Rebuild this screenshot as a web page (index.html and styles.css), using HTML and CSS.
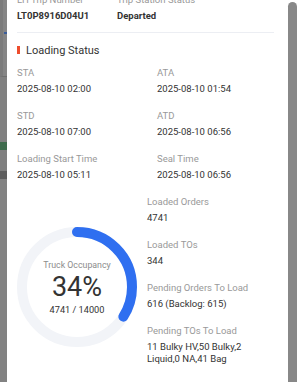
FILE: index.html
```html
<!DOCTYPE html>
<html>
<head>
<meta charset="utf-8">
<link rel="stylesheet" href="styles.css">
</head>
<body>
<div class="backdrop">
  <div class="bd-top"><span class="bd-mark"></span></div>
  <div class="bd-gap1"></div>
  <div class="bd-green"></div>
  <div class="bd-gap2"></div>
  <div class="bd-dark"></div>
  <div class="bd-rest"></div>
</div>
<div class="panel">
  <div class="content">
    <div class="trip-row">
      <div class="trip-col first">
        <div class="label">LH Trip Number</div>
        <div class="strong">LT0P8916D04U1</div>
      </div>
      <div class="trip-col">
        <div class="label">Trip Station Status</div>
        <div class="strong">Departed</div>
      </div>
    </div>
    <div class="divider"></div>
    <div class="heading"><span class="bar"></span>Loading Status</div>
    <div class="grid">
      <div class="item"><div class="label">STA</div><div class="value">2025-08-10 02:00</div></div>
      <div class="item"><div class="label">ATA</div><div class="value">2025-08-10 01:54</div></div>
      <div class="item"><div class="label">STD</div><div class="value">2025-08-10 07:00</div></div>
      <div class="item"><div class="label">ATD</div><div class="value">2025-08-10 06:56</div></div>
      <div class="item"><div class="label">Loading Start Time</div><div class="value">2025-08-10 05:11</div></div>
      <div class="item"><div class="label">Seal Time</div><div class="value">2025-08-10 06:56</div></div>
    </div>
    <div class="occupancy">
      <div class="donut-col">
        <div class="donut">
          <svg class="ring" width="120" height="120" viewBox="0 0 120 120">
            <circle cx="60" cy="60" r="55" fill="none" stroke="#f2f4f8" stroke-width="10"/>
            <circle cx="60" cy="60" r="55" fill="none" stroke="#2f6ff0" stroke-width="10" stroke-linecap="round" stroke-dasharray="117.5 400" transform="rotate(-90 60 60)"/>
          </svg>
          <div class="donut-text">
            <div class="donut-label">Truck Occupancy</div>
            <div class="donut-pct">34%</div>
            <div class="donut-sub">4741 / 14000</div>
          </div>
        </div>
      </div>
      <div class="stats">
        <div class="item"><div class="label">Loaded Orders</div><div class="value">4741</div></div>
        <div class="item"><div class="label">Loaded TOs</div><div class="value">344</div></div>
        <div class="item"><div class="label">Pending Orders To Load</div><div class="value">616 (Backlog: 615)</div></div>
        <div class="item"><div class="label">Pending TOs To Load</div><div class="value">11 Bulky HV,50 Bulky,2 Liquid,0 NA,41 Bag</div></div>
      </div>
    </div>
  </div>
  <div class="scrollbar"><div class="thumb"></div></div>
</div>
</body>
</html>
```
FILE: styles.css
```css
* { box-sizing: border-box; }
html, body { margin: 0; padding: 0; }
body {
  width: 300px;
  height: 382px;
  overflow: hidden;
  display: flex;
  font-family: Roboto, "Noto Sans", Arial, sans-serif;
  background: #fff;
}
.backdrop {
  width: 7px;
  flex: none;
  display: flex;
  flex-direction: column;
  background: #7d7d7d;
}
.bd-top {
  height: 77px;
  background: #858585;
  border-left: 3px solid #7b7b7b;
  border-bottom: 1px solid #6f6f6f;
  padding-top: 32px;
}
.bd-mark {
  display: block;
  width: 3px;
  height: 2px;
  background: #3a5d9a;
  margin-left: 1px;
}
.bd-gap1 { height: 65px; background: #808080; }
.bd-green { height: 8px; background: #3f6b4d; }
.bd-gap2 { height: 21px; background: #7f7f7f; }
.bd-dark { height: 8px; background: #5e5e5e; }
.bd-rest { flex: 1; background: #828282; }

.panel {
  flex: 1;
  display: flex;
  background: #fff;
  overflow: hidden;
}
.content {
  flex: 1;
  min-width: 0;
  padding: 0 14px 0 10px;
  margin-top: -7px;
}
.scrollbar {
  width: 9px;
  flex: none;
  margin-right: 3px;
  padding-top: 2px;
}
.thumb {
  height: 400px;
  background: #888;
  border-radius: 5px 5px 0 0;
}

.label {
  font-size: 9.5px;
  line-height: 14px;
  color: #999;
  white-space: nowrap;
}
.strong {
  font-size: 9.5px;
  line-height: 14px;
  font-weight: 700;
  color: #333;
  margin-top: 2px;
}
.value {
  font-size: 9.5px;
  line-height: 12px;
  color: #333;
  margin-top: 3px;
}
.trip-row { display: flex; }
.trip-col.first { width: 100px; }
.divider {
  height: 1px;
  background: #eceef3;
  margin-top: 9px;
}
.heading {
  display: flex;
  align-items: center;
  margin-top: 9px;
  height: 16px;
  font-size: 11px;
  color: #333;
}
.bar {
  width: 3px;
  height: 8px;
  background: #ee4d2d;
  margin-right: 6px;
}
.grid {
  display: grid;
  grid-template-columns: 140px 1fr;
  row-gap: 14px;
  margin-top: 8px;
}
.occupancy {
  display: flex;
  margin-top: 14px;
}
.donut-col {
  width: 130px;
  flex: none;
}
.donut {
  display: grid;
  width: 120px;
  height: 120px;
  margin-top: 32px;
}
.ring, .donut-text {
  grid-area: 1 / 1;
}
.donut-text {
  display: flex;
  flex-direction: column;
  align-items: center;
  justify-content: center;
}
.donut-label {
  font-size: 8.8px;
  line-height: 12px;
  color: #8c8c8c;
}
.donut-pct {
  font-size: 27px;
  line-height: 30px;
  color: #333;
  margin-top: 1px;
}
.donut-sub {
  font-size: 9.2px;
  line-height: 12px;
  color: #333;
  margin-top: 2px;
}
.stats {
  flex: 1;
  display: flex;
  flex-direction: column;
  gap: 14px;
}
```
